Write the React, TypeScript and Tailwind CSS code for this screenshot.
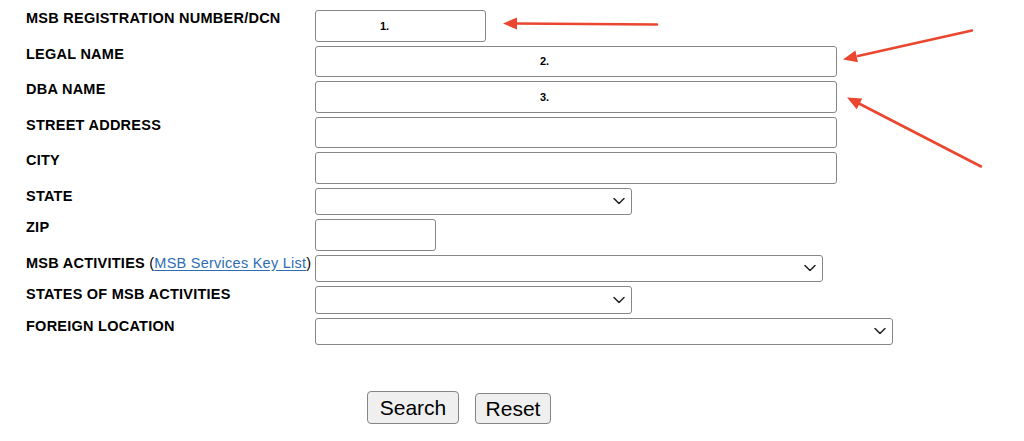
import React from "react";

type Field = {
  label: React.ReactNode;
  kind: "text" | "select";
  width: string;
  value?: string;
  indent?: string;
};

const fields: Field[] = [
  { label: "MSB REGISTRATION NUMBER/DCN", kind: "text", width: "w-[171px]", value: "1.", indent: "pl-[64px]" },
  { label: "LEGAL NAME", kind: "text", width: "w-[522px]", value: "2.", indent: "pl-[224px]" },
  { label: "DBA NAME", kind: "text", width: "w-[522px]", value: "3.", indent: "pl-[224px]" },
  { label: "STREET ADDRESS", kind: "text", width: "w-[522px]" },
  { label: "CITY", kind: "text", width: "w-[522px]" },
  { label: "STATE", kind: "select", width: "w-[317px]" },
  { label: "ZIP", kind: "text", width: "w-[121px]" },
  {
    label: (
      <>
        MSB ACTIVITIES{" "}
        <span className="font-normal">
          (
          <a href="#" className="text-[#2e6db4] underline underline-offset-2">
            MSB Services Key List
          </a>
          )
        </span>
      </>
    ),
    kind: "select",
    width: "w-[508px]",
  },
  { label: "STATES OF MSB ACTIVITIES", kind: "select", width: "w-[317px]" },
  { label: "FOREIGN LOCATION", kind: "select", width: "w-[578px]" },
];

const Chevron = () => (
  <svg
    className="pointer-events-none absolute right-[7px] top-1/2 -translate-y-1/2"
    width="12"
    height="7"
    viewBox="0 0 12 7"
    fill="none"
  >
    <path d="M1 1l5 5 5-5" stroke="#222" strokeWidth="1.5" strokeLinecap="round" strokeLinejoin="round" />
  </svg>
);

const Arrows = () => (
  <svg className="pointer-events-none absolute left-0 top-0" width="1024" height="441" viewBox="0 0 1024 441">
    <g stroke="#ea4630" strokeWidth="2.6" strokeLinecap="round" fill="#ea4630">
      {/* 1 */}
      <line x1="657" y1="24.5" x2="515" y2="23.5" />
      <polygon points="503,23.5 517,17.5 517,29.5" stroke="none" />
      {/* 2 */}
      <line x1="972" y1="30.5" x2="858" y2="56" />
      <polygon points="843,59.5 855.4,50.6 858,62.3" stroke="none" />
      {/* 3 */}
      <line x1="981" y1="166.5" x2="858" y2="103" />
      <polygon points="847,97.5 862.2,98.6 856.7,109.2" stroke="none" />
    </g>
  </svg>
);

export default function App() {
  return (
    <div className="relative h-[441px] w-[1024px] overflow-hidden bg-white font-['Liberation_Sans',Arial,sans-serif] text-black">
      <div className="pl-[26px] pt-[10px]">
        <div className="grid grid-cols-[289px_1fr] gap-y-[4px]">
          {fields.map((f, i) => (
            <React.Fragment key={i}>
              <div className="whitespace-nowrap text-[14.5px] font-bold leading-[17px] tracking-[0.25px]">{f.label}</div>
              <div>
                {f.kind === "text" ? (
                  <input
                    type="text"
                    readOnly
                    value={f.value ?? ""}
                    className={`${f.width} ${f.indent ?? "pl-2"} block h-[31.5px] rounded-[3px] border border-[#868686] bg-white text-[11px] font-bold text-black outline-none`}
                  />
                ) : (
                  <div className={`${f.width} relative`}>
                    <select className="block h-[27.5px] w-full appearance-none rounded-[3px] border border-[#868686] bg-white outline-none">
                      <option></option>
                    </select>
                    <Chevron />
                  </div>
                )}
              </div>
            </React.Fragment>
          ))}
        </div>
      </div>

      <div className="mt-[46px] flex items-end gap-[16px] pl-[367px]">
        <button className="h-[33px] w-[92px] rounded-[4px] border border-[#858585] bg-[#efefef] text-[21px] leading-none text-black">
          Search
        </button>
        <button className="h-[31px] w-[76px] rounded-[4px] border border-[#858585] bg-[#efefef] text-[21px] leading-none text-black">
          Reset
        </button>
      </div>

      <Arrows />
    </div>
  );
}
